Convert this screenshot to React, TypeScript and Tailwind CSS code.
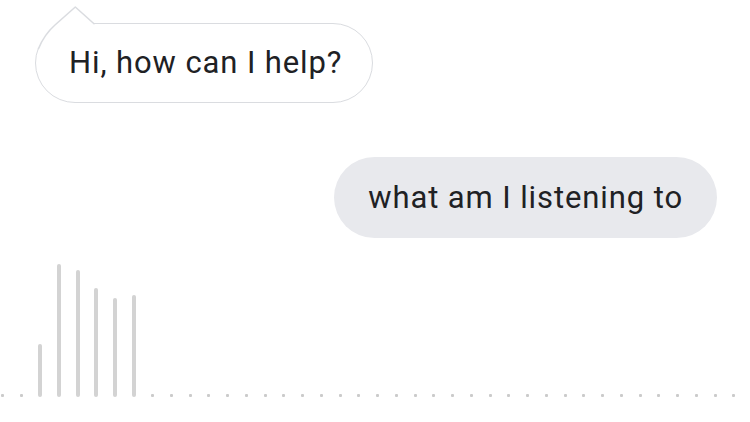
import React from 'react';

// wave form: index -> bar height in px (0 = idle dot)
const waveHeights: Record<number, number> = { 2: 53, 3: 133, 4: 127, 5: 109, 6: 99, 7: 102 };
const waveCount = 40;

const GreetingBubble = ({ text }: { text: string }) => (
    <div className="relative ml-[35px] self-start h-[80px] flex items-center pl-[33px] pr-[30px] rounded-full border-[1.5px] border-[#dadce0] bg-white">
        {/* speech tail over the top-left corner */}
        <svg
            className="absolute -left-[1.5px] -top-[1.5px] w-[80px] h-[40px] overflow-visible"
            viewBox="0 0 80 40"
            fill="none"
        >
            <path d="M 3.5 25.6 A 39.25 39.25 0 0 1 40 0.75 L 59 0.75" stroke="#ffffff" strokeWidth="4" />
            <path
                d="M 59 0.75 L 40.3 -16 L 20 2 Q 9.3 11.5 3.5 25.6"
                stroke="#dadce0"
                strokeWidth="1.5"
                strokeLinejoin="round"
                strokeLinecap="round"
            />
        </svg>
        <span className="text-[31px] leading-[34px] tracking-[0.9px] text-[#202124]">{text}</span>
    </div>
);

const QueryBubble = ({ text }: { text: string }) => (
    <div className="self-end mr-[33px] h-[81px] flex items-center pl-[34px] pr-[34px] rounded-full bg-[#e8e9ed]">
        <span className="text-[31px] leading-[34px] tracking-[0.9px] text-[#202124]">{text}</span>
    </div>
);

const WaveForm = () => (
    <div className="mt-[26px] h-[133px] flex items-end pl-[0.5px] gap-[14.75px]">
        {Array.from({ length: waveCount }).map((_, i) => {
            const h = waveHeights[i];
            return (
                <div key={i} className="w-[4px] flex justify-center items-end">
                    {h ? (
                        <div className="w-[4px] rounded-full bg-[#d3d3d3]" style={{ height: h }} />
                    ) : (
                        <div className="w-[3px] h-[3px] rounded-[1px] bg-[#cbcbcb]" />
                    )}
                </div>
            );
        })}
    </div>
);

export default function App() {
    return (
        <div className="w-full h-[422px] bg-white overflow-hidden flex flex-col pt-[23px] font-['Roboto','Liberation_Sans',sans-serif]">
            <GreetingBubble text="Hi, how can I help?" />
            <div className="mt-[54px] flex flex-col">
                <QueryBubble text="what am I listening to" />
            </div>
            <WaveForm />
        </div>
    );
}
